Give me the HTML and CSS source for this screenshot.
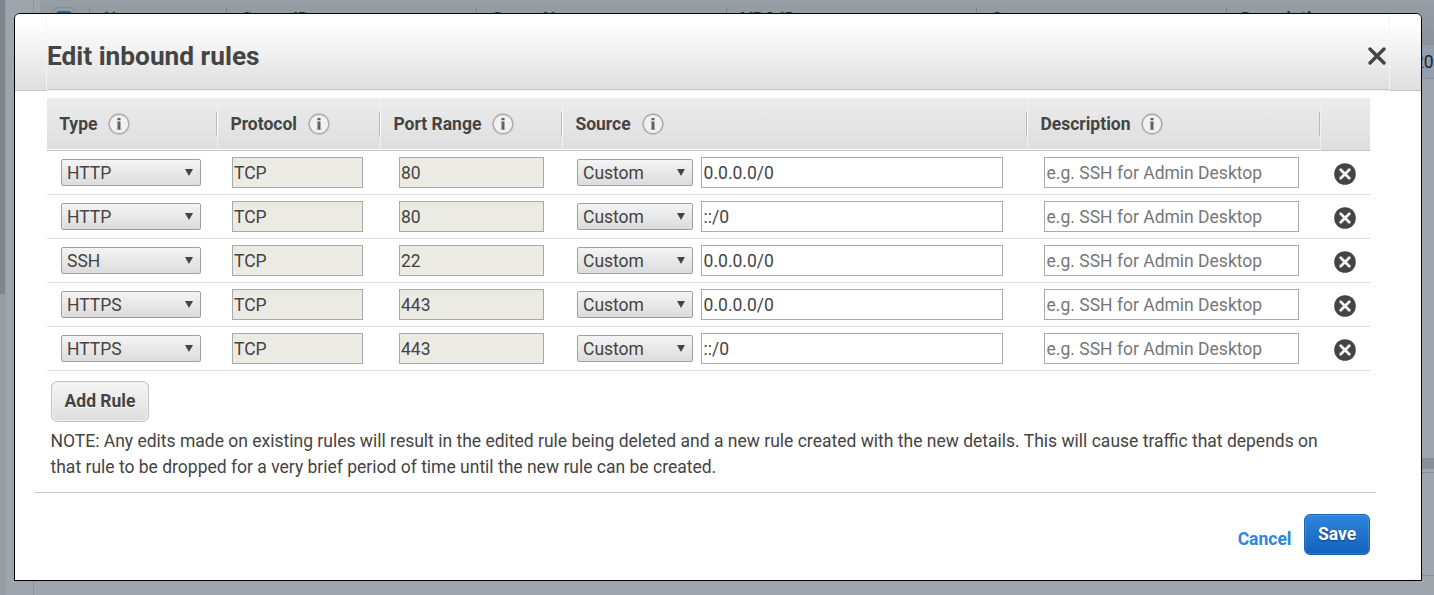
FILE: index.html
```html
<!DOCTYPE html>
<html lang="en">
<head>
<meta charset="utf-8">
<title>Edit inbound rules</title>
<link rel="stylesheet" href="styles.css">
</head>
<body>
<svg class="defs" width="0" height="0">
  <symbol id="info" viewBox="0 0 22 22">
    <circle cx="11" cy="11" r="9.9" fill="#f1f1f1" stroke="#b0b0b0" stroke-width="1.6"/>
    <path d="M9.5 5h3v2.2h-3zM9.5 8.5h3v8.2h-3z" fill="#606060"/>
    <path d="M8.5 8.5h1v1h-1zM8.5 15.7h1v1h-1zM12.5 15.7h1v1h-1z" fill="#aaa"/>
  </symbol>
  <symbol id="remove" viewBox="0 0 22 22">
    <circle cx="11" cy="11" r="10.8" fill="#444"/>
    <path d="M6.7 6.7l8.6 8.6M15.3 6.7l-8.6 8.6" stroke="#f4f4f4" stroke-width="2.8" stroke-linecap="round"/>
  </symbol>
</svg>
<div class="page">
  <div class="scroll"><div class="thumb"></div></div>
  <div class="side"></div>
  <div class="main">
    <div class="cols">
      <span class="chk"><i></i></span><span>Name</span><span>Group ID</span><span>Group Name</span><span>VPC ID</span><span>Owner</span><span>Description</span>
    </div>
    <div class="picked">20</div>
    <div class="list"></div>
    <div class="splitter"></div>
    <div class="detail"></div>
  </div>
</div>
<div class="modal">
  <div class="title">
    <div class="cap"></div>
    <div class="bar">
      <h1>Edit inbound rules</h1>
      <svg class="close" width="18" height="18" viewBox="0 0 18 18"><path d="M2 2l14 14M16 2L2 16" stroke="#444" stroke-width="3.4" stroke-linecap="round" fill="none"/></svg>
    </div>
    <div class="cap right"></div>
  </div>
  <div class="rules">
    <div class="grid head">
      <div>Type <svg><use href="#info"/></svg></div>
      <div>Protocol <svg><use href="#info"/></svg></div>
      <div>Port Range <svg><use href="#info"/></svg></div>
      <div>Source <svg><use href="#info"/></svg></div>
      <div>Description <svg><use href="#info"/></svg></div>
      <div></div>
    </div>
    <div class="grid row">
      <div><span class="select">HTTP</span></div><div><span class="field off">TCP</span></div><div><span class="field off">80</span></div>
      <div><span class="select">Custom</span><span class="field">0.0.0.0/0</span></div><div><span class="field hint">e.g. SSH for Admin Desktop</span></div><div><svg><use href="#remove"/></svg></div>
    </div>
    <div class="grid row">
      <div><span class="select">HTTP</span></div><div><span class="field off">TCP</span></div><div><span class="field off">80</span></div>
      <div><span class="select">Custom</span><span class="field">::/0</span></div><div><span class="field hint">e.g. SSH for Admin Desktop</span></div><div><svg><use href="#remove"/></svg></div>
    </div>
    <div class="grid row">
      <div><span class="select">SSH</span></div><div><span class="field off">TCP</span></div><div><span class="field off">22</span></div>
      <div><span class="select">Custom</span><span class="field">0.0.0.0/0</span></div><div><span class="field hint">e.g. SSH for Admin Desktop</span></div><div><svg><use href="#remove"/></svg></div>
    </div>
    <div class="grid row">
      <div><span class="select">HTTPS</span></div><div><span class="field off">TCP</span></div><div><span class="field off">443</span></div>
      <div><span class="select">Custom</span><span class="field">0.0.0.0/0</span></div><div><span class="field hint">e.g. SSH for Admin Desktop</span></div><div><svg><use href="#remove"/></svg></div>
    </div>
    <div class="grid row">
      <div><span class="select">HTTPS</span></div><div><span class="field off">TCP</span></div><div><span class="field off">443</span></div>
      <div><span class="select">Custom</span><span class="field">::/0</span></div><div><span class="field hint">e.g. SSH for Admin Desktop</span></div><div><svg><use href="#remove"/></svg></div>
    </div>
  </div>
  <button class="btn add">Add Rule</button>
  <p class="note">NOTE: Any edits made on existing rules will result in the edited rule being deleted and a new rule created with the new details. This will cause traffic that depends on<br>that rule to be dropped for a very brief period of time until the new rule can be created.</p>
  <div class="actions"><a class="cancel">Cancel</a><button class="btn save">Save</button></div>
</div>
</body>
</html>
```
FILE: styles.css
```css
* { box-sizing: border-box; }
body { margin: 0; width: 1434px; height: 595px; overflow: hidden; position: relative; font-family: Roboto, sans-serif; font-size: 17.5px; color: #444; }
.defs { display: block; position: absolute; }

/* dimmed console behind the dialog */
.page { display: flex; height: 595px; background: #9ea5ac; }
.scroll { flex: none; width: 6px; background: #969da5; }
.thumb { width: 5px; height: 294px; background: #7f868d; }
.side { flex: none; width: 28px; border-right: 1px solid #8b9299; }
.main { flex: 1; min-width: 0; display: flex; flex-direction: column; }
.cols { display: grid; grid-template-columns: 49px 137px 250px 250px 250px 250px 1fr; height: 44px; margin-left: 6px; background: linear-gradient(#979ea6, #8c9298); font-weight: 700; color: #2c3136; }
.cols span { padding: 9px 0 0 15px; line-height: 20px; background: linear-gradient(#777e85, #777e85) 0 7px / 1px 24px no-repeat; }
.cols .chk { padding: 7px 0 0 12px; background: none; }
.chk i { display: flex; width: 24px; height: 24px; padding: 3px; border: 1px solid #858c93; border-radius: 7px; }
.chk i::before { content: ""; flex: 1; border-radius: 4px; background: #2264a8; }
.picked { height: 35px; padding-left: 1380px; border: solid #8b9198; border-width: 1px 0; background: #929dae; line-height: 35px; color: #20252a; white-space: nowrap; }
.list { height: 379px; }
.splitter { height: 15px; background: linear-gradient(#878e94 11px, #9ea5ac 11px 14px, #878d94 14px); }
.detail { height: 103px; border-bottom: 1px solid #878e94; }

.modal { position: absolute; left: 14px; top: 13px; width: 1408px; height: 568px; background: #fff; border: 1px solid #000; border-radius: 6px 6px 0 0; overflow: hidden; }
.title { display: flex; height: 77px; }
.cap { width: 32px; height: 77px; background: linear-gradient(#fff, #fff 10%, #dfdfdf); border-bottom: 1px solid #c5c5c5; border-right: 1px solid #f4f4f4; }
.cap.right { border-right: 0; border-left: 1px solid #f4f4f4; }
.bar { flex: 1; height: 76px; display: flex; justify-content: space-between; background: linear-gradient(#fff, #fff 10%, #dfdfdf); border-bottom: 1px solid #c5c5c5; box-shadow: 0 1px #eee; }
h1 { margin: 26px 0 0; font-size: 26.25px; line-height: 32px; font-weight: 700; }
.close { margin: 33px 3px 0 0; }

.rules { width: 1323px; margin: 7px 0 0 32px; }
.grid { display: grid; grid-template-columns: 170px 163px 182px 465px 293px 50px; }
.head { height: 53px; border-bottom: 1px solid #c5c5c5; font-weight: 700; }
.head div { display: flex; gap: 11px; padding: 1px 0 0 13.4px; align-items: center; background: linear-gradient(#bbb, #bbb) right 0 top 14px / 1px 24px no-repeat, linear-gradient(#fff, #fff) 0 14px / 1px 24px no-repeat, linear-gradient(#f0f0f0, #f0f0f0) 0 0 / 1px 100% no-repeat, linear-gradient(#ececec, #dedede); border-bottom: 1px solid #fff; }
.head div:first-child { padding-left: 12.2px; background: linear-gradient(#bbb, #bbb) right 0 top 14px / 1px 24px no-repeat, linear-gradient(#ececec, #dedede); }
.head div:last-child { border: 0; background: linear-gradient(#f0f0f0, #f0f0f0) 0 0 / 1px 100% no-repeat, linear-gradient(#ececec, #dedede); }
.head svg, .row svg { width: 22px; height: 22px; display: block; }
.row { height: 44px; border-bottom: 1px solid #ddd; }
.row > div { display: flex; padding-top: 6px; }
.row > div:nth-child(1) { padding-left: 14px; }
.row > div:nth-child(2) { padding-left: 15px; }
.row > div:nth-child(3) { padding-left: 19px; }
.row > div:nth-child(4) { padding-left: 15px; gap: 8px; }
.row > div:nth-child(5) { padding-left: 17px; }
.row > div:nth-child(6) { padding: 12px 0 0 14px; }
.field { height: 31px; width: 131px; border: 1px solid #aaa; padding-left: 1.6px; line-height: 31px; background: #fff; white-space: nowrap; }
.off { background: #ebebe4; padding-left: 1px; }
.hint { color: #777; }
div:nth-child(3) > .field { width: 145px; }
div:nth-child(4) > .field { width: 302px; }
div:nth-child(5) > .field { width: 255px; }
.select { display: flex; justify-content: space-between; align-items: flex-start; width: 140px; height: 27px; margin-top: 2px; padding: 0 7px 0 5px; border: 1px solid #a0a0a0; border-radius: 2px; line-height: 27px; background: linear-gradient(#f4f4f4, #dcdcdc); }
.select::after { content: ""; border: 4px solid transparent; border-top: 7px solid #444; border-bottom: 0; margin-top: 9px; }
div:nth-child(4) > .select { width: 116px; }

.btn { display: block; height: 41px; padding: 0 0 2px; border-radius: 6px; font: 700 17.5px/36px Roboto, sans-serif; }
.add { width: 98px; margin: 10px 0 0 36px; border: 1px solid #c4c4c4; color: #444; background: linear-gradient(#f5f5f5, #dedede); text-shadow: 0 1px #fff; box-shadow: inset 0 0 0 1px #eee; }
.note { width: 1342px; height: 65px; margin: 6px 0 0 19px; padding-left: 16.5px; border-bottom: 1px solid #c9c9c9; line-height: 26px; white-space: nowrap; }
.actions { display: flex; justify-content: flex-end; padding: 21px 51px 0 0; gap: 12.5px; }
.cancel { color: #2f86dd; font-weight: 700; line-height: 50px; }
.save { width: 66px; border: 1px solid #1866b7; color: #fff; background: linear-gradient(#3085dc, #1162bb); text-shadow: 0 1px 2px #084484; box-shadow: inset 0 0 0 1px rgba(255,255,255,.12); }
```
